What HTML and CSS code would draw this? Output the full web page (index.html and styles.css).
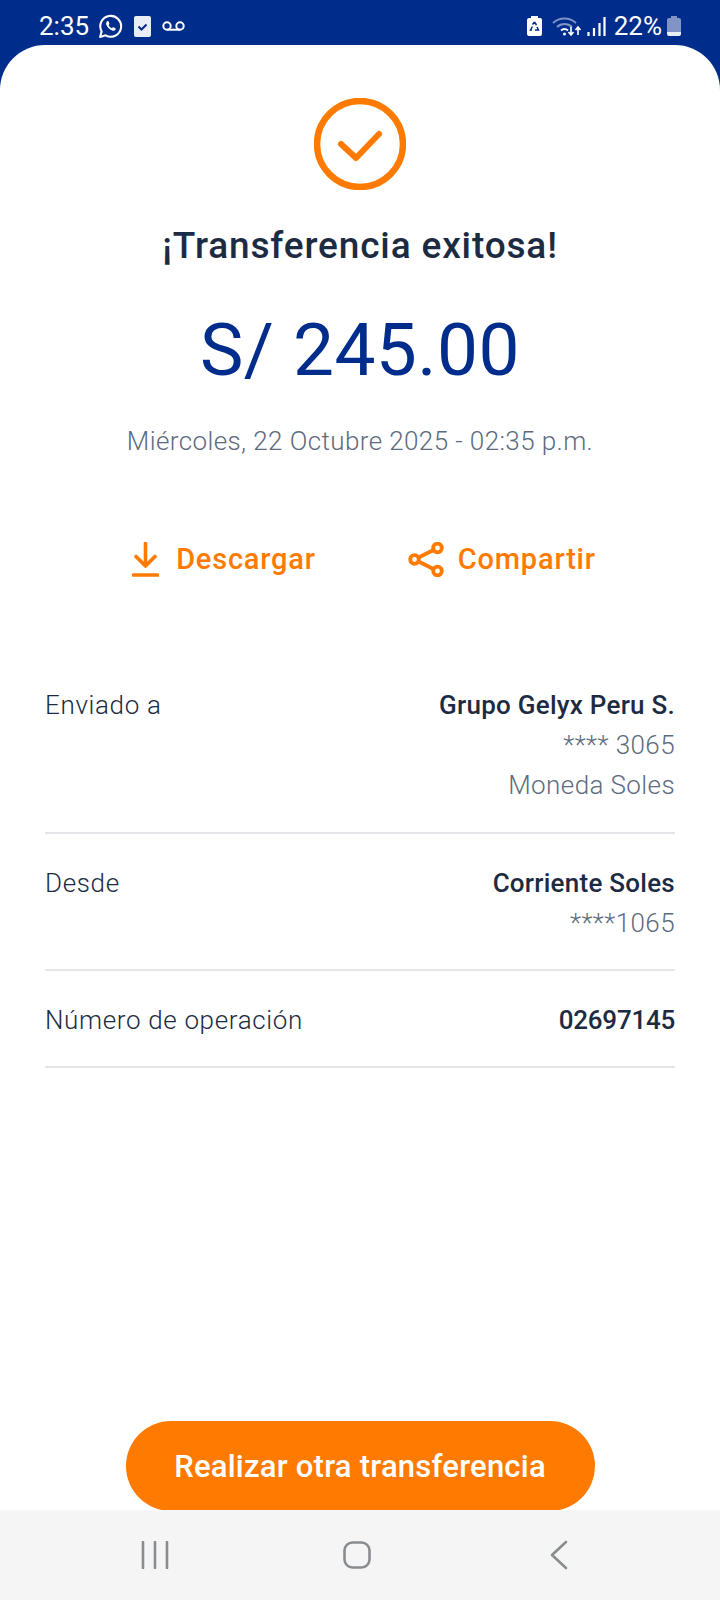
FILE: index.html
```html
<!DOCTYPE html>
<html lang="es">
<head>
<meta charset="utf-8">
<title>Transferencia exitosa</title>
<link rel="stylesheet" href="styles.css">
</head>
<body>
<div class="phone">
  <header class="status">
    <div class="status-group">
      <span class="clock">2:35</span>
      <svg class="ic-wa" viewBox="0 0 24 24"><path d="M2 22l1.500-5.300A10 10 0 1 1 7.300 20.500z" fill="none" stroke="#fff" stroke-width="2" stroke-linejoin="round"/><path d="M8.600 7.200c-.9.800-1.100 2-.5 3.400 1 2.300 2.900 4.200 5.400 5.200 1.400.5 2.600.2 3.300-.8.4-.6.300-1.100-.2-1.400l-1.600-.8c-.4-.2-.7-.1-1 .2l-.6.700c-1.400-.5-2.600-1.700-3.300-3.100l.6-.6c.3-.3.3-.6.2-1l-.7-1.700c-.3-.6-1.100-.7-1.600-.1z" fill="#fff"/></svg>
      <svg class="ic-check" viewBox="0 0 17 21"><rect width="17" height="21" rx="2" fill="#e9edf6"/><path d="M4.500 10.500l3 3 5-5" fill="none" stroke="#002d8c" stroke-width="2"/></svg>
      <svg class="ic-vm" viewBox="0 0 23 10"><circle cx="5" cy="5" r="3.700" fill="none" stroke="#fff" stroke-width="2"/><circle cx="18" cy="5" r="3.700" fill="none" stroke="#fff" stroke-width="2"/><path d="M5 8.700h13" stroke="#fff" stroke-width="2"/></svg>
    </div>
    <div class="status-group right">
      <svg class="ic-rbat" viewBox="0 0 15 20"><path d="M4 0h7v2h2a2 2 0 0 1 2 2v14a2 2 0 0 1-2 2H2a2 2 0 0 1-2-2V4a2 2 0 0 1 2-2h2z" fill="#fff"/><path d="M7.500 6l2 3M10 11l1.500 3H8M5 14H3.500L5.500 10.500M5.500 8.500L7.500 6" fill="none" stroke="#002d8c" stroke-width="1.500"/></svg>
      <svg class="ic-wifi" viewBox="0 0 30 20"><g fill="none" stroke="#7f95c6" stroke-width="2"><path d="M1 7a17 17 0 0 1 23 0"/><path d="M5 11a11 11 0 0 1 15 0"/></g><path d="M9 14.500a5.500 5.500 0 0 1 7 0" fill="none" stroke="#fff" stroke-width="2"/><circle cx="12.500" cy="18" r="1.500" fill="#fff"/><path d="M19 11v8m-2.500-3l2.500 3 2.500-3M26 19v-8m-2.500 3l2.500-3 2.500 3" fill="none" stroke="#fff" stroke-width="1.600"/></svg>
      <svg class="ic-signal" viewBox="0 0 19 19"><path d="M1.500 15v4M7 11v8M12.500 6v13M17.500 0v19" stroke="#fff" stroke-width="2.200"/></svg>
      <span class="pct">22%</span>
      <svg class="ic-bat" viewBox="0 0 14 20"><path d="M4 0h6v2h2a2 2 0 0 1 2 2v13H0V4a2 2 0 0 1 2-2h2z" fill="#8095c6"/><path d="M0 16h14v2a2 2 0 0 1-2 2H2a2 2 0 0 1-2-2z" fill="#e9edf6"/></svg>
    </div>
  </header>

  <main class="sheet">
    <svg class="ic-ok" viewBox="0 0 92 92"><circle cx="46" cy="46" r="43" fill="none" stroke="#ff7a00" stroke-width="6.500"/><path d="M27 46l15 14 23-24" fill="none" stroke="#ff7a00" stroke-width="6" stroke-linecap="round" stroke-linejoin="round"/></svg>
    <h1 class="title">¡Transferencia exitosa!</h1>
    <p class="amount">S/ 245.00</p>
    <p class="date">Miércoles, 22 Octubre 2025 - 02:35 p.m.</p>

    <div class="actions">
      <a class="action">
        <svg class="ic-dl" viewBox="0 0 27 35"><path d="M13.500 1.500v22M4 14.500l9.500 9.500 9.500-9.500M1.500 33h24" fill="none" stroke="#ff7a00" stroke-width="3.600" stroke-linecap="round" stroke-linejoin="round"/></svg>
        <span>Descargar</span>
      </a>
      <a class="action">
        <svg class="ic-share" viewBox="0 0 36 35"><g fill="none" stroke="#ff7a00" stroke-width="3.800"><circle cx="6.500" cy="17.500" r="4.300"/><circle cx="29.500" cy="6" r="4.300"/><circle cx="29.500" cy="29" r="4.300"/><path d="M10.500 15.500l15-7.500M10.500 19.500l15 7.500"/></g></svg>
        <span>Compartir</span>
      </a>
    </div>

    <section class="details">
      <div class="row">
        <span class="label">Enviado a</span>
        <div class="values">
          <strong>Grupo Gelyx Peru S.</strong>
          <span>**** 3065</span>
          <span>Moneda Soles</span>
        </div>
      </div>
      <div class="row">
        <span class="label">Desde</span>
        <div class="values">
          <strong>Corriente Soles</strong>
          <span>****1065</span>
        </div>
      </div>
      <div class="row">
        <span class="label">Número de operación</span>
        <div class="values"><strong class="digits">02697145</strong></div>
      </div>
    </section>

    <button class="cta">Realizar otra transferencia</button>
  </main>

  <nav class="navbar">
    <svg class="ic-recents" viewBox="0 0 28 28"><path d="M2 1v26M14 1v26M26 1v26" stroke="#8a8d90" stroke-width="2.600" stroke-linecap="round"/></svg>
    <svg class="ic-home" viewBox="0 0 28 28"><rect x="1.500" y="1.500" width="25" height="25" rx="8" fill="none" stroke="#8a8d90" stroke-width="2.600"/></svg>
    <svg class="ic-back" viewBox="0 0 18 30"><path d="M16 2L2 15l14 13" fill="none" stroke="#8a8d90" stroke-width="2.600" stroke-linecap="round" stroke-linejoin="round"/></svg>
  </nav>
</div>
</body>
</html>
```

FILE: styles.css
```css
* { box-sizing: border-box; }

html, body {
  margin: 0;
  padding: 0;
}

body {
  font-family: "Roboto", "Liberation Sans", sans-serif;
  background: #002d8c;
}

.phone {
  width: 720px;
  height: 1600px;
  display: flex;
  flex-direction: column;
  background: #002d8c;
  overflow: hidden;
}

.status {
  height: 45px;
  flex: none;
  display: flex;
  justify-content: space-between;
  align-items: center;
  padding: 7px 39px 0 39px;
  color: #fff;
}

.status-group {
  display: flex;
  align-items: center;
}

.clock, .pct {
  font-size: 26px;
  font-weight: 400;
  line-height: 28px;
}

.ic-wa { width: 25px; height: 25px; margin-left: 9px; }
.ic-check { width: 17px; height: 21px; margin-left: 11px; }
.ic-vm { width: 23px; height: 10px; margin-left: 11px; }
.ic-rbat { width: 15px; height: 20px; }
.ic-wifi { width: 30px; height: 20px; margin-left: 10px; }
.ic-signal { width: 19px; height: 19px; margin-left: 5px; }
.pct { margin-left: 8px; }
.ic-bat { width: 14px; height: 20px; margin-left: 5px; }

.sheet {
  flex: 1;
  display: flex;
  flex-direction: column;
  align-items: center;
  background: #fff;
  border-radius: 45px 45px 0 0;
  padding-top: 53px;
  overflow: hidden;
}

.ic-ok { width: 92px; height: 92px; flex: none; }

.title {
  margin: 32px 0 0;
  font-size: 37px;
  font-weight: 500;
  letter-spacing: 0.85px;
  line-height: 48px;
  color: #1d2b42;
}

.amount {
  margin: 35px 0 0;
  font-size: 73px;
  font-weight: 400;
  letter-spacing: 0.45px;
  line-height: 90px;
  color: #002d8c;
}

.date {
  margin: 30px 0 0;
  font-size: 26px;
  font-weight: 300;
  letter-spacing: 0.4px;
  line-height: 32px;
  color: #5e6b7e;
}

.actions {
  display: flex;
  gap: 92px;
  margin-top: 84px;
  margin-left: 8px;
}

.action {
  display: flex;
  align-items: center;
  gap: 17px;
  font-size: 29px;
  font-weight: 500;
  letter-spacing: 0.8px;
  line-height: 36px;
  color: #ff7a00;
}

.ic-dl { width: 27px; height: 35px; }
.ic-share { width: 36px; height: 35px; margin-right: -3px; }

.details {
  align-self: stretch;
  margin: 108px 45px 0;
}

.row {
  display: flex;
  justify-content: space-between;
  border-bottom: 2px solid #e3e5e8;
  padding: 29px 0 26px;
  font-size: 26px;
  line-height: 40px;
}

.row:first-child { padding: 0 0 27px; }

.label {
  font-weight: 300;
  letter-spacing: 0.65px;
  color: #1d2b42;
}

.values {
  display: flex;
  flex-direction: column;
  align-items: flex-end;
  font-weight: 300;
  letter-spacing: 0.4px;
  color: #5e6b7e;
}

.values strong {
  font-weight: 500;
  letter-spacing: 0.25px;
  color: #1d2b42;
}

.values .digits { letter-spacing: -0.25px; }

.cta {
  margin-top: auto;
  margin-bottom: -1px;
  flex: none;
  width: 469px;
  height: 90px;
  border: 0;
  border-radius: 45px;
  background: #ff7a00;
  color: #fff;
  font-family: inherit;
  font-size: 31px;
  font-weight: 500;
  letter-spacing: 0.23px;
}

.navbar {
  height: 90px;
  flex: none;
  background: #f5f5f5;
  display: flex;
  align-items: flex-start;
  padding-top: 31px;
}

.ic-recents { width: 28px; height: 28px; margin-left: 141px; }
.ic-home { width: 28px; height: 28px; margin-left: 174px; }
.ic-back { width: 18px; height: 30px; margin-left: 179px; margin-top: -1px; }
```
